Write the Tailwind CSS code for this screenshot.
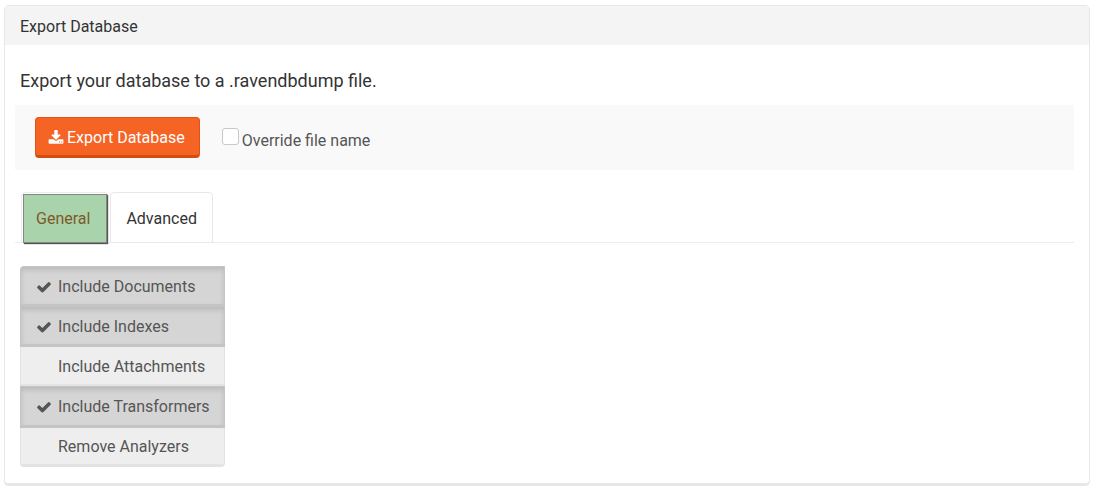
<!DOCTYPE html>
<html lang="en">
<head>
<meta charset="utf-8">
<meta name="viewport" content="width=device-width, initial-scale=1">
<title>Export Database</title>
<script src="https://cdn.jsdelivr.net/npm/@tailwindcss/browser@4"></script>
</head>
<body class="bg-white font-['Roboto',sans-serif] text-base text-[#333]">
<svg class="hidden" aria-hidden="true">
  <symbol id="check" viewBox="0 0 1792 1792"><path fill="currentColor" d="M1671 566q0 40-28 68l-724 724-136 136q-28 28-68 28t-68-28l-136-136-362-362q-28-28-28-68t28-68l136-136q28-28 68-28t68 28l294 295 656-657q28-28 68-28t68 28l136 136q28 28 28 68z"/></symbol>
</svg>
<main class="pt-[5px] pr-1.5 pl-1">
  <section class="rounded-[5px] border border-b-[3px] border-[#e7e7e7] shadow-[0_1px_1px_#f3f3f3]">
    <h1 class="rounded-t bg-[#f4f4f4] px-[15px] pt-[9px] pb-[7px] leading-[23px]">Export Database</h1>
    <div class="pt-[22px] pr-[15px] pb-4 pl-[10px]">
      <h2 class="pl-[5px] text-lg leading-7">Export your database to a .ravendbdump file.</h2>
      <div class="mt-[10px] flex items-start bg-[#f9f9f9] px-5 py-3">
        <button type="button" class="flex h-[41px] items-center gap-[3px] rounded border border-b-[3px] border-[#e25412] border-b-[#d54d0d] bg-[#f56424] pt-[2px] pr-[14px] pl-3 text-white">
          <svg class="size-4" viewBox="0 0 1792 1792" aria-hidden="true"><path fill="currentColor" d="M1344 1344q0-26-19-45t-45-19-45 19-19 45 19 45 45 19 45-19 19-45zm256 0q0-26-19-45t-45-19-45 19-19 45 19 45 45 19 45-19 19-45zm128-224v320q0 40-28 68t-68 28H160q-40 0-68-28t-28-68v-320q0-40 28-68t68-28h465l135 136q58 56 136 56t136-56l136-136h464q40 0 68 28t28 68zm-325-569q17 41-14 70l-448 448q-18 19-45 19t-45-19L403 621q-31-29-14-70 17-39 59-39h256V64q0-26 19-45t45-19h256q26 0 45 19t19 45v448h256q42 0 59 39z"/></svg>
          Export Database
        </button>
        <div class="flex items-start gap-[3px] pt-[11px] pl-[22px]">
          <input id="override" type="checkbox" class="size-[17px] appearance-none rounded-[3px] border border-[#c8c8c8] bg-white checked:bg-[#f56424]">
          <label for="override" class="pt-px leading-6 text-[#555]">Override file name</label>
        </div>
      </div>
      <nav class="mt-[22px] flex gap-[2px] border-b border-[#ececec] pl-[6px]" aria-label="Export options">
        <div class="-mb-px h-[51px] rounded-t border border-b-0 border-[#ececec] pt-px pl-px">
          <a href="#general" aria-current="page" class="flex h-[49px] items-center border border-[#858585] bg-[#a9d3aa] pr-4 pl-3 text-[#7d5a2c] shadow-[1px_1px_1px_#555]">General</a>
        </div>
        <a href="#advanced" class="-mb-px flex h-[51px] items-center rounded-t border border-[#e8e8e8] bg-white px-[15px] pt-[2px] text-[#333]">Advanced</a>
      </nav>
      <div id="general" class="mt-[23px] ml-[5px] flex w-[205px] flex-col text-[#555]">
        <button type="button" aria-pressed="true" class="z-10 flex h-[41px] items-center gap-[6px] rounded-tl border border-b-[3px] border-[#c4c4c4] bg-[#d5d5d5] pt-[2px] pl-[15px] shadow-[inset_0_3px_5px_#00000020]"><svg class="size-4" aria-hidden="true"><use href="#check"/></svg>Include Documents</button>
        <button type="button" aria-pressed="true" class="z-10 -mt-px flex h-[41px] items-center gap-[6px] border border-b-[3px] border-[#c4c4c4] bg-[#d5d5d5] pt-[2px] pl-[15px] shadow-[inset_0_3px_5px_#00000020]"><svg class="size-4" aria-hidden="true"><use href="#check"/></svg>Include Indexes</button>
        <button type="button" aria-pressed="false" class="-mt-px flex h-[41px] items-center border border-b-[3px] border-[#e3e3e3] bg-[#eee] pt-[2px] pl-[37px]">Include Attachments</button>
        <button type="button" aria-pressed="true" class="z-10 -mt-px flex h-[42px] items-center gap-[6px] border border-b-[3px] border-[#c4c4c4] bg-[#d5d5d5] pt-[2px] pl-[15px] shadow-[inset_0_3px_5px_#00000020]"><svg class="size-4" aria-hidden="true"><use href="#check"/></svg>Include Transformers</button>
        <button type="button" aria-pressed="false" class="-mt-px flex h-10 items-center rounded-b border border-b-[3px] border-[#e3e3e3] bg-[#eee] pt-[2px] pl-[37px]">Remove Analyzers</button>
      </div>
    </div>
  </section>
</main>
</body>
</html>
